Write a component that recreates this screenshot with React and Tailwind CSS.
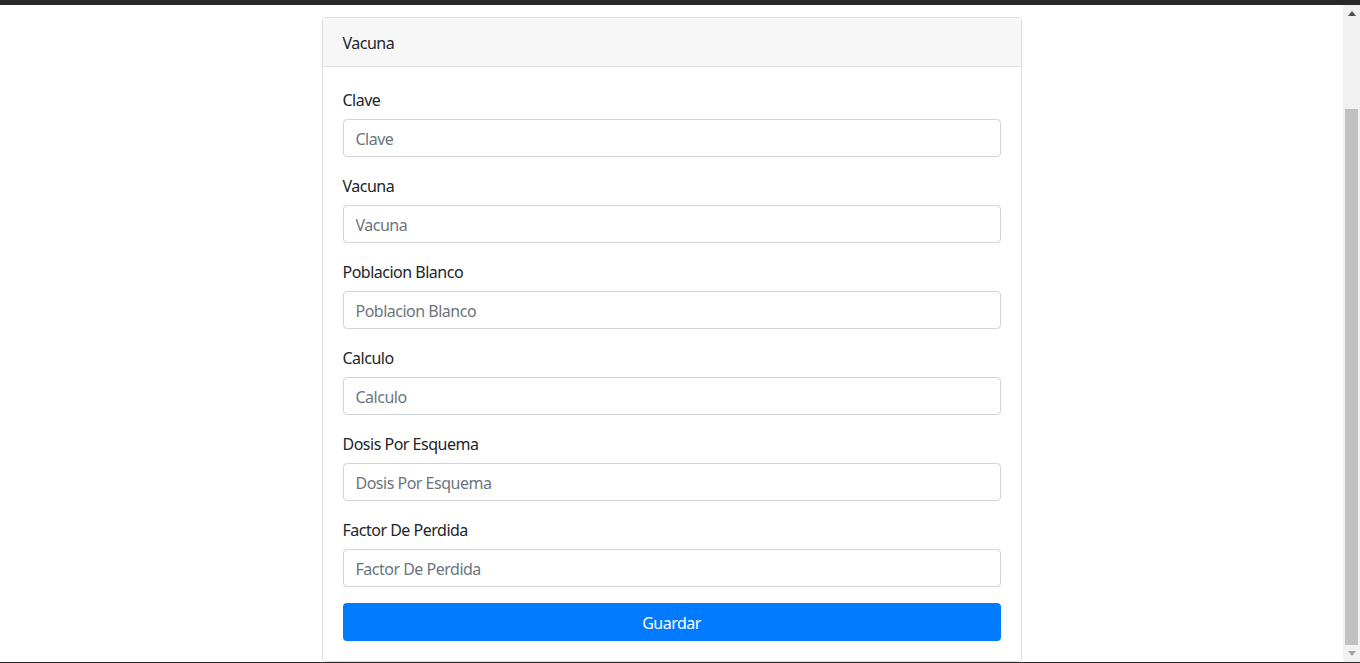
import React from "react";

const fields = [
  "Clave",
  "Vacuna",
  "Poblacion Blanco",
  "Calculo",
  "Dosis Por Esquema",
  "Factor De Perdida",
];

export default function App() {
  return (
    <div
      className="h-[663px] w-[1360px] flex flex-col bg-white overflow-hidden text-[#212529] tracking-[-0.5px]"
      style={{ fontFamily: '"Noto Sans", "Open Sans", sans-serif' }}
    >
      <div className="h-[5px] bg-[#282828] shrink-0" />
      <div className="flex-1 flex min-h-0">
        <div className="flex-1 flex justify-center pt-[12px]">
          <div className="w-[700px] h-[645px] border border-[#dfdfdf] rounded-[4px] flex flex-col">
            <div className="h-[49px] bg-[#f7f7f7] border-b border-[#dfdfdf] px-[20px] pt-[1px] flex items-center text-[16px] leading-[24px] rounded-t-[3px]">
              Vacuna
            </div>
            <div className="p-[20px] flex flex-col">
              {fields.map((f) => (
                <div key={f} className="mb-[16px] flex flex-col">
                  <label className="text-[16px] leading-[24px] pt-[1px] h-[24px] mb-[8px]">{f}</label>
                  <input
                    placeholder={f}
                    className="h-[38px] w-full border border-[#ced4da] rounded-[4px] px-[12px] pt-[2px] text-[16px] leading-[24px] tracking-[-0.5px] placeholder:text-[#6c757d] outline-none"
                    style={{ fontFamily: '"Noto Sans", "Open Sans", sans-serif' }}
                  />
                </div>
              ))}
              <button
                className="h-[38px] w-full bg-[#007bff] text-white rounded-[4px] pt-[1px] text-[16px] leading-[24px] tracking-[-0.5px]"
                style={{ fontFamily: '"Noto Sans", "Open Sans", sans-serif' }}
              >
                Guardar
              </button>
            </div>
          </div>
        </div>
        <div className="w-[17px] bg-[#f1f1f1] flex flex-col items-center shrink-0">
          <div className="h-[17px] w-full flex items-center justify-center">
            <svg width="8" height="5" viewBox="0 0 8 5">
              <polygon points="4,0 8,5 0,5" fill="#505050" />
            </svg>
          </div>
          <div className="h-[87px]" />
          <div className="w-[13px] h-[536px] bg-[#c1c1c1]" />
          <div className="flex-1" />
          <div className="h-[17px] w-full flex items-center justify-center">
            <svg width="8" height="5" viewBox="0 0 8 5">
              <polygon points="0,0 8,0 4,5" fill="#a3a3a3" />
            </svg>
          </div>
        </div>
      </div>
      <div className="h-[1px] bg-[#282828] shrink-0" />
    </div>
  );
}
